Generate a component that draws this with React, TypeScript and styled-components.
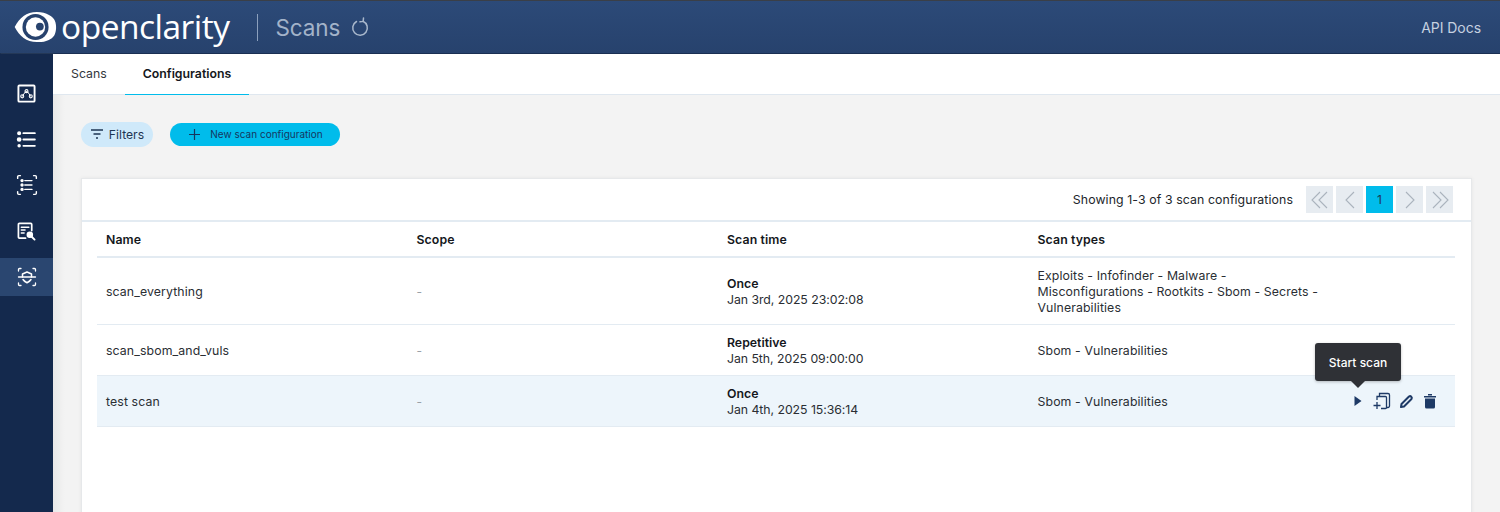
import React from "react";
import styled, { createGlobalStyle } from "styled-components";

const Global = createGlobalStyle`
  html, body { margin: 0; padding: 0; height: 512px; overflow: hidden; background: #f3f3f3; }
  body { font-family: Inter, "Liberation Sans", sans-serif; color: #14171c; }
  * { box-sizing: border-box; }
`;

const Page = styled.div`display: flex; flex-direction: column; width: 1500px; height: 512px; overflow: hidden;`;
const Header = styled.header`
  height: 54px; flex: none; display: flex; align-items: center; padding: 0 19px 0 14px;
  background: linear-gradient(#2c4a78, #27426d); border-top: 1px solid #3a3f47; border-bottom: 1px solid #1a2f52;
`;
const LogoText = styled.span`
  font-family: "Open Sans", sans-serif; font-size: 33.5px; line-height: 40px; color: #fff; margin-left: 4px; letter-spacing: -0.5px; margin-top: -3px;
`;
const Divider = styled.span`width: 1px; height: 27px; background: #8ca0bd; margin-left: 27px;`;
const Title = styled.span`font-size: 22.5px; font-weight: 400; color: #a3b3c9; margin-left: 18px; letter-spacing: -0.1px;`;
const Refresh = styled.span`display: flex; margin-left: 10px; color: #a9b8cc;`;
const Docs = styled.span`margin-left: auto; font-size: 14px; color: #c6d1e0; letter-spacing: -0.05px;`;
const Body = styled.div`flex: 1; min-height: 0; display: flex;`;
const Sidebar = styled.nav`width: 53px; flex: none; background: #14294d; display: flex; flex-direction: column; padding-top: 20px; box-shadow: 1px 0 1px #5b6472;`;
const SideItem = styled.div<{ $active?: boolean }>`
  height: 38px; margin-bottom: 8px; display: flex; align-items: center; justify-content: center; color: #fff;
  background: ${(p) => (p.$active ? "#2a4670" : "transparent")};
`;
const Main = styled.main`flex: 1; min-width: 0; display: flex; flex-direction: column;`;
const Tabs = styled.div`height: 41px; flex: none; background: #fff; border-bottom: 1px solid #dfe7ef; display: flex;`;
const Tab = styled.div<{ $active?: boolean }>`
  height: 41px; padding: 0 18px; display: flex; align-items: center; font-size: 12.300px; padding-bottom: 1px;
  font-weight: ${(p) => (p.$active ? 600 : 400)}; color: ${(p) => (p.$active ? "#14171c" : "#33373d")};
  border-bottom: 1px solid ${(p) => (p.$active ? "#00bceb" : "transparent")};
`;
const Content = styled.div`flex: 1; min-height: 0; padding: 27px 28px 0 28px; background: linear-gradient(90deg, #e9e9e9 0, #f3f3f3 12px);`;
const Actions = styled.div`display: flex; align-items: center; gap: 17px; height: 24px;`;
const FilterBtn = styled.button`
  height: 25px; width: 72px; border: 0; border-radius: 13px; background: #cfe9fa; color: #1e3553; font: 400 12.200px Inter, sans-serif;
  display: flex; align-items: center; justify-content: center; gap: 5px; padding: 0;
`;
const NewBtn = styled.button`
  height: 23px; width: 170px; border: 0; border-radius: 12px; background: #00bceb; color: #16365f; font: 400 10px Inter, sans-serif;
  display: flex; align-items: center; justify-content: center; gap: 9px; padding: 0 0 0 1px;
`;
const Card = styled.section`margin: 32px 0 0 0; height: 340px; background: #fff; border: 1px solid #e6e8ea; box-shadow: 0 0 4px rgba(0,0,0,.06); display: flex; flex-direction: column;`;
const Pager = styled.div`height: 43px; flex: none; display: flex; align-items: center; justify-content: flex-end; gap: 3px; padding: 0 18px 0 0; border-bottom: 2px solid #e3ebf2;`;
const Showing = styled.span`font-size: 12.300px; color: #22262b; margin-right: 10px; letter-spacing: .1px;`;
const PageBtn = styled.div<{ $current?: boolean }>`
  width: 27px; height: 27px; display: flex; align-items: center; justify-content: center; font-size: 12px; color: #1e3553;
  background: ${(p) => (p.$current ? "#00bceb" : "#e7ecf1")};
`;
const Table = styled.div`margin: 0 16px 0 15px;`;
const Row = styled.div<{ $h: number; $selected?: boolean; $head?: boolean }>`
  position: relative; height: ${(p) => p.$h}px; display: grid; grid-template-columns: 310.500px 310.500px 310.500px 1fr;
  align-items: center; padding: 1px 0 0 9px; font-size: 12.300px; color: #2a2e33;
  border-bottom: ${(p) => (p.$head ? 2 : 1)}px solid #e3ebf2;
  background: ${(p) => (p.$selected ? "#edf5fb" : "#fff")};
  font-weight: ${(p) => (p.$head ? 600 : 400)};
`;
const HeadCell = styled.span`color: #14171c; letter-spacing: .1px;`;
const Cell = styled.span`line-height: 16px; letter-spacing: .11px;`;
const Dash = styled.span`color: #9aa1a8; font-size: 12px;`;
const Strong = styled.div`font-weight: 600; color: #14171c; letter-spacing: 0;`;
const DateText = styled.div`letter-spacing: -0.05px;`;
const RowIcons = styled.div`position: absolute; left: 1249px; top: 0; bottom: 0; display: flex; align-items: center; color: #1e3a66;`;
const RowIcon = styled.span`width: 24px; height: 24px; display: flex; align-items: center; justify-content: center;`;
const Tooltip = styled.div`
  position: absolute; left: 1218px; top: -33px; width: 86px; height: 38px; border-radius: 3px; background: #2f3136; color: #fff;
  font-size: 12px; font-weight: 500; display: flex; align-items: center; justify-content: center; box-shadow: 0 1px 3px rgba(0,0,0,.25);
  &::after { content: ""; position: absolute; left: 36px; top: 38px; border: 7px solid transparent; border-top-color: #2f3136; border-bottom: 0; }
`;

const Logo = () => (
  <svg width="43" height="31" viewBox="0 0 43 32">
    <path d="M0 15.500 C5 6 12 0 23 0 C33 0 40 5 41.500 9 C43.500 14 43 20 41 24 C38 29 31 31.500 23 31 C12 31 5 25 0 15.500Z" fill="#fff" />
    <circle cx="21.500" cy="15.500" r="13.500" fill="#27426d" />
    <circle cx="21.500" cy="15.500" r="10" fill="#fff" />
    <circle cx="26" cy="15" r="4" fill="#27426d" />
  </svg>
);
const Ic = ({ children, s = 20 }: { children: React.ReactNode; s?: number }) => (
  <svg width={s} height={s} viewBox="0 0 20 20" fill="none" stroke="currentColor" strokeWidth="1.500" strokeLinecap="round" strokeLinejoin="round">{children}</svg>
);
const Corners = () => <path d="M1.500 4V2.500A1 1 0 0 1 2.500 1.500H4M16 1.500h1.500a1 1 0 0 1 1 1V4M18.500 16v1.500a1 1 0 0 1-1 1H16M4 18.500H2.500a1 1 0 0 1-1-1V16" strokeWidth="1.300" />;
const SideIcons = [
  <Ic key="1" s={19}><rect x="1.500" y="1.500" width="17" height="17" rx="1" strokeWidth="2" /><path d="M5.500 13L9 8l2 0 3.500 5" strokeWidth="1" /><circle cx="5.500" cy="13" r="1.600" strokeWidth="1.100" /><circle cx="10" cy="7.500" r="1.600" strokeWidth="1.100" /><circle cx="14.500" cy="13" r="1.600" strokeWidth="1.100" /></Ic>,
  <Ic key="2" s={21}><path d="M7 4h11M7 10h11M7 16h11" strokeWidth="1.700" /><circle cx="3" cy="4" r="1.200" fill="currentColor" /><circle cx="3" cy="10" r="1.500" fill="currentColor" /><circle cx="3" cy="16" r=".9" fill="currentColor" /></Ic>,
  <Ic key="3" s={22}><Corners /><path d="M8 6h6.500M8 10h6.500M8 14h6.500" strokeWidth="1.300" /><circle cx="5.500" cy="6" r=".8" fill="currentColor" /><circle cx="5.500" cy="10" r=".8" fill="currentColor" /><circle cx="5.500" cy="14" r=".8" fill="currentColor" /></Ic>,
  <Ic key="4" s={19}><path d="M9 17H2.500A1 1 0 0 1 1.500 16V2.500A1 1 0 0 1 2.500 1.500H14.500A1 1 0 0 1 15.500 2.500V9" strokeWidth="1.800" /><path d="M4.500 5.500h8M4.500 8.500h4M4.500 11.500h3" /><circle cx="13.500" cy="13.500" r="2.700" fill="currentColor" /><path d="M15.500 15.500l3 3" strokeWidth="2" /></Ic>,
  <Ic key="5" s={20}><Corners /><path d="M1.500 10h17" strokeWidth="1.300" /><path d="M5.500 10V7L10 5l4.500 2v3M6 12.500c1 1.500 2.500 2.500 4 3.200 1.500-.7 3-1.700 4-3.200" strokeWidth="1.500" /></Ic>,
];

const Dbl = ({ flip }: { flip?: boolean }) => (
  <svg width="20" height="20" viewBox="0 0 20 20" fill="none" stroke="#aab3bd" strokeWidth="1.100" style={{ transform: flip ? "scaleX(-1)" : undefined }}>
    <path d="M10 2L2 10l8 8M17 2l-8 8 8 8" />
  </svg>
);
const Sgl = ({ flip }: { flip?: boolean }) => (
  <svg width="20" height="20" viewBox="0 0 20 20" fill="none" stroke="#aab3bd" strokeWidth="1.100" style={{ transform: flip ? "scaleX(-1)" : undefined }}>
    <path d="M14 2l-8 8 8 8" />
  </svg>
);

const rows = [
  { name: "scan_everything", when: "Once", date: "Jan 3rd, 2025 23:02:08", types: ["Exploits - Infofinder - Malware -", "Misconfigurations - Rootkits - Sbom - Secrets -", "Vulnerabilities"], h: 67 },
  { name: "scan_sbom_and_vuls", when: "Repetitive", date: "Jan 5th, 2025 09:00:00", types: ["Sbom - Vulnerabilities"], h: 51 },
  { name: "test scan", when: "Once", date: "Jan 4th, 2025 15:36:14", types: ["Sbom - Vulnerabilities"], h: 51, selected: true },
];

export default function App() {
  return (
    <Page>
      <Global />
      <Header>
        <Logo />
        <LogoText>openclarity</LogoText>
        <Divider />
        <Title>Scans</Title>
        <Refresh>
          <svg width="20" height="20" viewBox="0 0 20 20" fill="none" stroke="currentColor" strokeWidth="1.500" strokeLinecap="round">
            <path d="M6.500 4.500A7.300 7.300 0 1 0 13 4.200" />
            <path d="M13.500 1l-.3 3.400-3.200 .4" />
          </svg>
        </Refresh>
        <Docs>API Docs</Docs>
      </Header>
      <Body>
        <Sidebar>
          {SideIcons.map((icon, i) => (
            <SideItem key={i} $active={i === 4}>{icon}</SideItem>
          ))}
        </Sidebar>
        <Main>
          <Tabs>
            <Tab>Scans</Tab>
            <Tab $active>Configurations</Tab>
          </Tabs>
          <Content>
            <Actions>
              <FilterBtn>
                <svg width="14" height="14" viewBox="0 0 14 14" fill="none" stroke="#1e3553" strokeWidth="1.400"><path d="M1 3h12M3.500 7h7M6 11h2" /></svg>
                Filters
              </FilterBtn>
              <NewBtn>
                <svg width="13" height="13" viewBox="0 0 13 13" fill="none" stroke="#16365f" strokeWidth="1.200"><path d="M6.500 1v11M1 6.500h11" /></svg>
                New scan configuration
              </NewBtn>
            </Actions>
            <Card>
              <Pager>
                <Showing>Showing 1-3 of 3 scan configurations</Showing>
                <PageBtn><Dbl /></PageBtn>
                <PageBtn><Sgl /></PageBtn>
                <PageBtn $current>1</PageBtn>
                <PageBtn><Sgl flip /></PageBtn>
                <PageBtn><Dbl flip /></PageBtn>
              </Pager>
              <Table>
                <Row $h={36} $head>
                  <HeadCell>Name</HeadCell>
                  <HeadCell>Scope</HeadCell>
                  <HeadCell>Scan time</HeadCell>
                  <HeadCell>Scan types</HeadCell>
                </Row>
                {rows.map((r) => (
                  <Row key={r.name} $h={r.h} $selected={r.selected}>
                    <Cell>{r.name}</Cell>
                    <Dash>-</Dash>
                    <Cell><Strong>{r.when}</Strong><DateText>{r.date}</DateText></Cell>
                    <Cell>{r.types.map((t) => <div key={t}>{t}</div>)}</Cell>
                    {r.selected && (
                      <>
                        <Tooltip>Start scan</Tooltip>
                        <RowIcons>
                          <RowIcon>
                            <svg width="10" height="12" viewBox="0 0 10 12"><path d="M1.500 1l7 5-7 5z" fill="currentColor" /></svg>
                          </RowIcon>
                          <RowIcon>
                            <svg width="18" height="18" viewBox="0 0 18 18" fill="none" stroke="currentColor" strokeWidth="1.300"><path d="M6.500 4V1.500h8.500a1.500 1.500 0 0 1 1.500 1.500v11a1.500 1.500 0 0 1-1.500 1.500H13.500" /><path d="M4 8V4.500h8.500a1 1 0 0 1 1 1v10a1 1 0 0 1-1 1H8" /><path d="M4 10v7M.5 13.500h7" /></svg>
                          </RowIcon>
                          <RowIcon>
                            <svg width="15" height="15" viewBox="0 0 15 15" fill="none" stroke="currentColor" strokeWidth="2" strokeLinejoin="round"><path d="M2.500 10L10 2.500a1.800 1.800 0 0 1 2.500 2.500L5 12.500 2 13z" /></svg>
                          </RowIcon>
                          <RowIcon>
                            <svg width="14" height="16" viewBox="0 0 14 16" fill="currentColor"><path d="M1 3h12v1.500H1zM5 1h4v1.500H5zM2 5.500h10V14a1.500 1.500 0 0 1-1.500 1.500h-7A1.500 1.500 0 0 1 2 14z" /></svg>
                          </RowIcon>
                        </RowIcons>
                      </>
                    )}
                  </Row>
                ))}
              </Table>
            </Card>
          </Content>
        </Main>
      </Body>
    </Page>
  );
}
